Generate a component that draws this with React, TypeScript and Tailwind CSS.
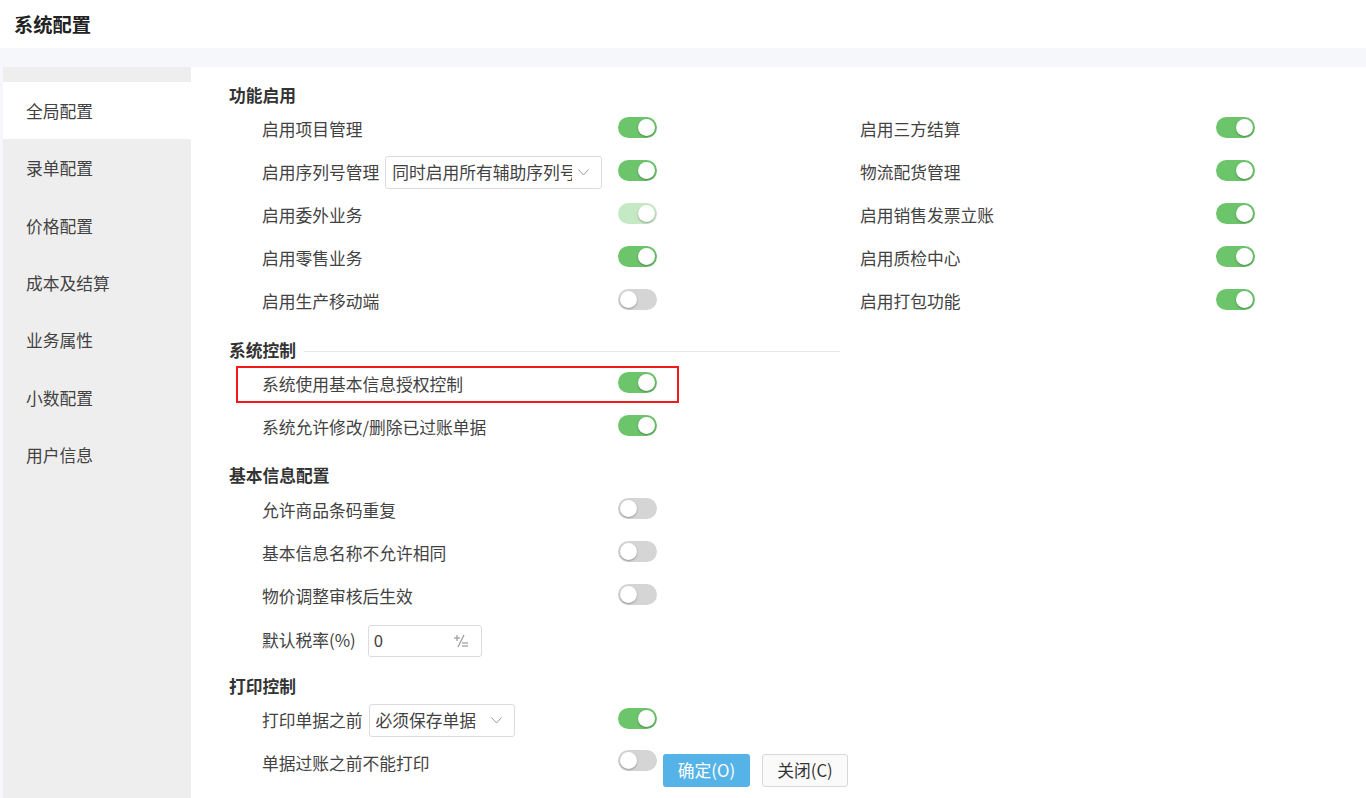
import React from "react";

type ToggleState = "on" | "off" | "disabled";

function Toggle({ state }: { state: ToggleState }) {
  const track =
    state === "on"
      ? "bg-[#6cc46b]"
      : state === "disabled"
        ? "bg-[#c6e9c5]"
        : "bg-[#d5d5d5]";
  return (
    <div
      className={`flex h-[21px] w-[39px] shrink-0 items-center rounded-full px-[2px] ${track} ${
        state === "off" ? "justify-start" : "justify-end"
      }`}
    >
      <div className="h-[17px] w-[17px] rounded-full bg-white shadow-[0_1px_2px_rgba(0,0,0,0.3)]" />
    </div>
  );
}

function Chevron() {
  return (
    <svg width="11" height="7" viewBox="0 0 11 7" className="shrink-0">
      <polyline points="0.5,0.5 5.5,6 10.5,0.5" fill="none" stroke="#9a9a9a" strokeWidth="1" />
    </svg>
  );
}

function SelectBox({ value, width }: { value: string; width: string }) {
  return (
    <div
      className={`ml-[6px] flex h-[33px] items-center gap-[6px] overflow-hidden rounded-[3px] border border-[#dcdcdc] bg-white pl-[6px] pr-[12px] ${width}`}
    >
      <span className="min-w-0 flex-1 overflow-hidden whitespace-nowrap">{value}</span>
      <Chevron />
    </div>
  );
}

function Row({
  label,
  state,
  extra,
}: {
  label: string;
  state: ToggleState;
  extra?: React.ReactNode;
}) {
  return (
    <div className="flex h-[43px] items-center">
      <div className="flex w-[356px] items-center">
        <span className="whitespace-nowrap">{label}</span>
        {extra}
      </div>
      <div className="-mt-[4px]">
        <Toggle state={state} />
      </div>
    </div>
  );
}

function SectionTitle({ title, line }: { title: string; line?: boolean }) {
  return (
    <div className="flex h-[24px] w-[611px] items-center gap-[8px]">
      <span className="font-bold text-[#333]">{title}</span>
      {line && <div className="h-px flex-1 bg-[#e6e6e6]" />}
    </div>
  );
}

const menu = ["全局配置", "录单配置", "价格配置", "成本及结算", "业务属性", "小数配置", "用户信息"];

export default function App() {
  return (
    <div
      className="flex h-[798px] w-[1366px] flex-col overflow-hidden bg-[#f5f7fa] text-[16.75px] text-[#424242]"
      style={{ fontFamily: '"Noto Sans CJK SC", "Noto Sans", sans-serif' }}
    >
      <div className="flex h-[48px] shrink-0 items-center bg-white pl-[14px]">
        <span className="text-[19.25px] font-bold text-[#222]">系统配置</span>
      </div>

      <div className="mt-[19px] flex min-h-0 flex-1">
        <div className="w-[3px] shrink-0" />
        <div className="w-[188px] shrink-0 bg-[#eeeeee] pt-[15px]">
          {menu.map((m, i) => (
            <div
              key={m}
              className={`flex h-[57.3px] items-center pl-[23px] pt-[2px] ${i === 0 ? "bg-white" : ""}`}
            >
              {m}
            </div>
          ))}
        </div>

        <div className="flex-1 bg-white pl-[38px] pt-[17px]">
          <SectionTitle title="功能启用" />
          <div className="flex pl-[33px]">
            <div className="w-[598px]">
              <Row label="启用项目管理" state="on" />
              <Row
                label="启用序列号管理"
                state="on"
                extra={<SelectBox value="同时启用所有辅助序列号" width="w-[217px]" />}
              />
              <Row label="启用委外业务" state="disabled" />
              <Row label="启用零售业务" state="on" />
              <Row label="启用生产移动端" state="off" />
            </div>
            <div>
              <Row label="启用三方结算" state="on" />
              <Row label="物流配货管理" state="on" />
              <Row label="启用销售发票立账" state="on" />
              <Row label="启用质检中心" state="on" />
              <Row label="启用打包功能" state="on" />
            </div>
          </div>

          <div className="mt-[16px]">
            <SectionTitle title="系统控制" line />
          </div>
          <div className="pl-[33px]">
            <div className="relative">
              <Row label="系统使用基本信息授权控制" state="on" />
              <div className="pointer-events-none absolute left-[-26px] top-[3px] h-[37px] w-[443px] border-2 border-[#f21b1b]" />
            </div>
            <Row label="系统允许修改/删除已过账单据" state="on" />
          </div>

          <div className="mt-[15px]">
            <SectionTitle title="基本信息配置" />
          </div>
          <div className="pl-[33px] pt-[1px]">
            <Row label="允许商品条码重复" state="off" />
            <Row label="基本信息名称不允许相同" state="off" />
            <Row label="物价调整审核后生效" state="off" />
            <div className="flex h-[43px] items-center pt-[2px]">
              <span className="whitespace-nowrap">默认税率(%)</span>
              <div className="ml-[12px] flex h-[32px] w-[114px] items-center justify-between rounded-[3px] border border-[#dcdcdc] pl-[5px] pr-[12px]">
                <span>0</span>
                <svg width="16" height="14" viewBox="0 0 16 14">
                  <g stroke="#9a9a9a" strokeWidth="1.2" fill="none">
                    <line x1="1" y1="4" x2="7" y2="4" />
                    <line x1="4" y1="1" x2="4" y2="7" />
                    <line x1="11" y1="1" x2="5" y2="13" />
                    <line x1="9" y1="9" x2="15" y2="9" />
                    <line x1="9" y1="12" x2="15" y2="12" />
                  </g>
                </svg>
              </div>
            </div>
          </div>

          <div className="mt-[14px]">
            <SectionTitle title="打印控制" />
          </div>
          <div className="pl-[33px]">
            <Row
              label="打印单据之前"
              state="on"
              extra={<SelectBox value="必须保存单据" width="w-[146px]" />}
            />
            <div className="flex h-[43px] items-center">
              <div className="w-[356px] whitespace-nowrap">单据过账之前不能打印</div>
              <div className="-mt-[6px]">
                <Toggle state="off" />
              </div>
              <div className="ml-[6px] mt-[14px] flex gap-[12px]">
                <button className="flex h-[33px] w-[87px] items-center justify-center rounded-[3px] bg-[#56b3e7] text-white">
                  确定(O)
                </button>
                <button className="flex h-[33px] w-[86px] items-center justify-center rounded-[3px] border border-[#d9d9d9] bg-[#fafafa] text-[#333]">
                  关闭(C)
                </button>
              </div>
            </div>
          </div>
        </div>
      </div>
    </div>
  );
}
